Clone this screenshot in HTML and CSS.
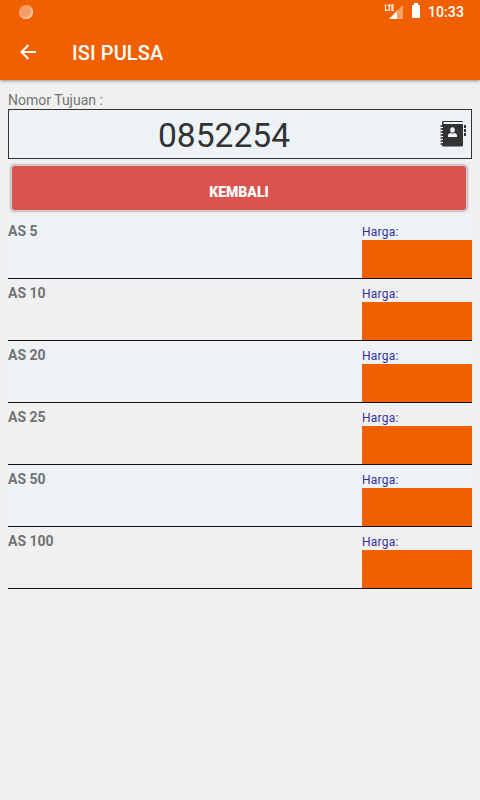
FILE: index.html
```html
<!DOCTYPE html>
<html lang="id">
<head>
    <meta charset="UTF-8">
    <title>Isi Pulsa</title>
    <link rel="stylesheet" href="styles.css">
</head>
<body>
    <div class="header">
        <div class="status">
            <span class="dot"></span>
            <svg class="signal" width="20" height="18" viewBox="0 0 20 18">
                <path d="M19 4v14H5z" fill="#f89f66" />
                <path d="M13 10v8H5z" fill="#fff" />
                <path d="M0 3h11v7H0z" fill="#f06000" />
                <path d="M1.500 3.500v5.800h2.500M3.500 4.200h3.500M5.300 4.200v5.800M10 4.200H8v5.200h2M8 6.800h2" fill="none" stroke="#fff" stroke-width="1.200" />
            </svg>
            <svg class="battery" width="8" height="15" viewBox="0 0 8 15">
                <path d="M2 0h4v2h2v13H0V2h2z" fill="#fff" />
            </svg>
            <span class="time">10:33</span>
        </div>
        <div class="bar">
            <svg class="back" width="16" height="16" viewBox="0 0 16 16">
                <path d="M16 8H1.500M8.500 1L1.500 8l7 7" fill="none" stroke="#fff" stroke-width="2" />
            </svg>
            <h1>ISI PULSA</h1>
        </div>
    </div>
    <div class="content">
        <p class="label">Nomor Tujuan :</p>
        <div class="number">
            <span>0852254</span>
            <svg class="contact" width="27" height="28" viewBox="0 0 27 28">
                <path d="M4 1h19q1 0 1 1H4.500v2H23q1 0 1 1v20q0 1.500-1.500 1.500h-18q-1.500 0-1.500-1.500V2q0-1 1-1z" fill="#333" />
                <path d="M1.500 6h3M1.500 9h3M1.500 12h3M1.500 15h3M1.500 18h3M1.500 21h3M1.500 24h3" stroke="#333" stroke-width="1.300" />
                <path d="M3 7.500h1M3 10.500h1M3 13.500h1M3 16.500h1M3 19.500h1M3 22.500h1" stroke="#ecf2f6" stroke-width="1" />
                <ellipse cx="13.500" cy="10" rx="2.300" ry="2.800" fill="#ecf2f6" />
                <path d="M9 17v-1.500q0-2 3-2.500l1.500 1 1.500-1q3 .5 3 2.500V17z" fill="#ecf2f6" />
                <path d="M25 5h2v3h-2zM25 9h2v3h-2zM25 13h2v3h-2z" fill="#333" />
            </svg>
        </div>
        <button class="btn">KEMBALI</button>
        <ul class="list">
            <li><b>AS 5</b><div class="price"><span>Harga:</span><i></i></div></li>
            <li><b>AS 10</b><div class="price"><span>Harga:</span><i></i></div></li>
            <li><b>AS 20</b><div class="price"><span>Harga:</span><i></i></div></li>
            <li><b>AS 25</b><div class="price"><span>Harga:</span><i></i></div></li>
            <li><b>AS 50</b><div class="price"><span>Harga:</span><i></i></div></li>
            <li><b>AS 100</b><div class="price"><span>Harga:</span><i></i></div></li>
        </ul>
    </div>
</body>
</html>
```
FILE: styles.css
```css
* { padding: 0; margin: 0; box-sizing: border-box; }
li { list-style: none; }

body { background: #f0f0f0; font-family: Roboto, sans-serif; min-height: 800px; }
svg { display: block; flex: none; }

.header { height: 80px; background: #f06000; color: #fff; box-shadow: 0 1px 3px rgba(0,0,0,0.4); }

.status { display: flex; height: 24px; padding: 0 16px 0 19px; }
.dot { width: 14px; height: 14px; margin: 5px auto 0 0; border-radius: 50%; background: #f79e66; box-shadow: inset -1px -1px 2px #fde0cc; }
.signal { margin: 1px 8px 0 0; }
.battery { margin: 3px 8px 0 0; }
.time { font-size: 14px; font-weight: 500; line-height: 25px; letter-spacing: 0.1px; }

.bar { display: flex; align-items: center; height: 56px; padding-left: 20px; }
.bar h1 { margin-left: 36px; padding-top: 2px; font-size: 20px; font-weight: 500; line-height: 24px; letter-spacing: 0.1px; }

.content { padding: 12px 8px 0; }
.label { height: 17px; font-size: 14px; line-height: 17px; color: #737373; }

.number { display: flex; align-items: center; height: 50px; padding-right: 5px; border: 1px solid #333; background: #ecf2f6; }
.number span { flex: 1; padding: 3px 0 0; text-align: center; font-size: 33.6px; line-height: 40px; color: #333; }

.btn { display: block; width: 454px; height: 44px; margin: 7px 0 0 4px; padding-top: 8px; border: none; border-radius: 3px; background: #d9534f; box-shadow: 0 0 0 2px #c9c9c9, 0 0 0 3px #e0e0e0; color: #fff; font-family: inherit; font-size: 14px; font-weight: 900; line-height: 36px; }

.list { margin-top: 7px; }
.list li { display: flex; justify-content: space-between; height: 62px; border-bottom: 1px solid #111; }
.list li:nth-child(odd) { background: #ecf2f6; }
.list b { padding-top: 6px; font-size: 14px; line-height: 17px; color: #737373; }
.price { width: 110px; }
.price span { display: block; height: 23px; padding-top: 7px; font-size: 12px; line-height: 16px; letter-spacing: 0.25px; color: #3030a0; }
.price i { display: block; height: 38px; background: #f06000; }
```
